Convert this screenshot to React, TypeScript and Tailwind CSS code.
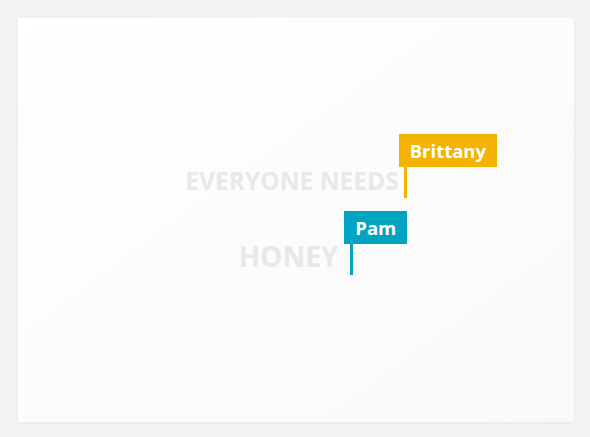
export default function App() {
  return (
    <div
      className="h-[437px] w-[590px] bg-[#f3f3f3] pl-[18px] pr-[16px] pt-[18px]"
      style={{ fontFamily: '"Open Sans", "Liberation Sans", sans-serif' }}
    >
      <div className="flex h-[404px] flex-col items-center justify-center bg-gradient-to-br from-white to-[#f9f9f9] pt-[2px] shadow-[0_1px_4px_rgba(0,0,0,0.06)]">
        <div className="flex items-end">
          <span className="pb-[5px] text-[24.5px] font-bold leading-none text-[#e7e8ea]">
            EVERYONE NEEDS
          </span>
          <div className="relative ml-[5px] h-[31px] w-[3px] bg-[#f4b300]">
            <div className="absolute bottom-full left-[-5px] whitespace-nowrap bg-[#f4b300] px-[11px] py-[5px] text-[18.5px] font-bold leading-[23px] text-white">
              Brittany
            </div>
          </div>
        </div>
        <div className="mt-[44px] flex items-end">
          <span className="pb-[5px] text-[28px] font-bold leading-none text-[#e7e8ea]">
            HONEY
          </span>
          <div className="relative ml-[12px] h-[31px] w-[3px] bg-[#00a4c0]">
            <div className="absolute bottom-full left-[-6px] whitespace-nowrap bg-[#00a4c0] px-[11px] py-[5px] text-[18.5px] font-bold leading-[23px] text-white">
              Pam
            </div>
          </div>
        </div>
      </div>
    </div>
  );
}
